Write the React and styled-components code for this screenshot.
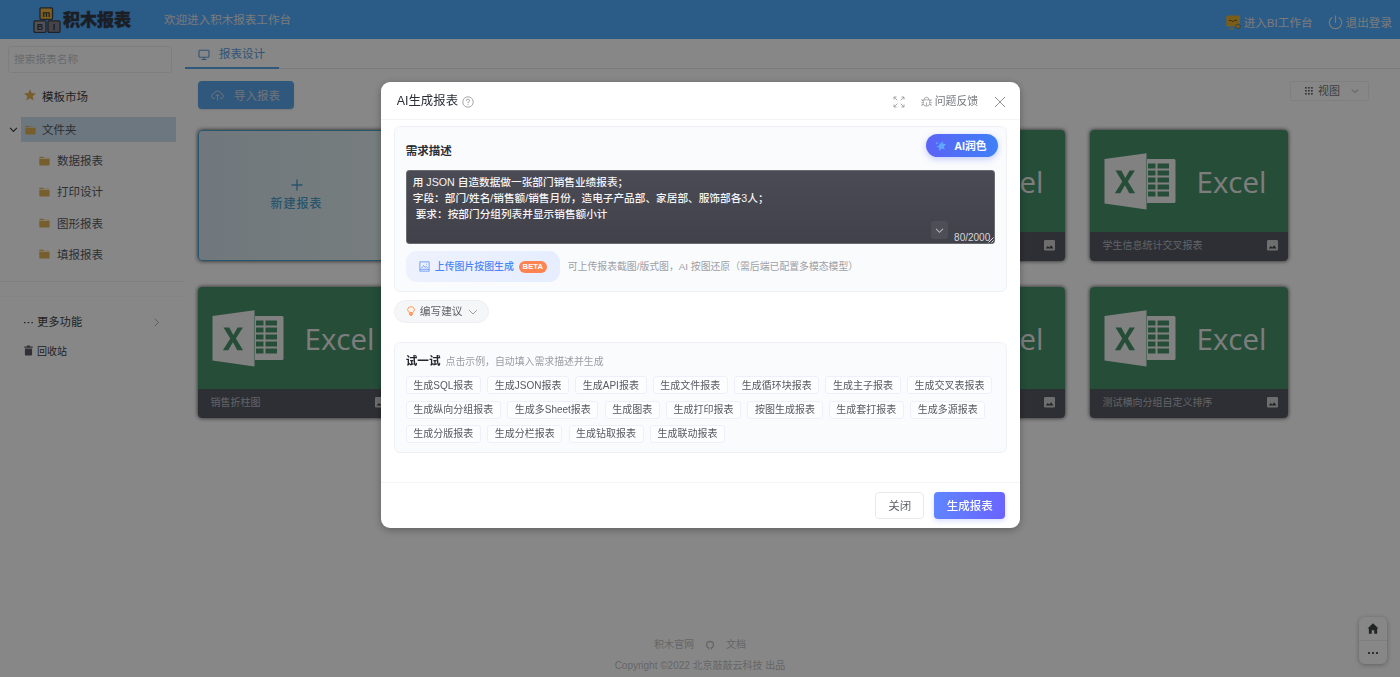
import React, { Fragment } from "react";
import styled, { createGlobalStyle } from "styled-components";

const GlobalStyle = createGlobalStyle`
    * { box-sizing: border-box; }
    html, body { margin: 0; padding: 0; overflow: hidden; }
    body {
        background: #fff;
        color: #3c3f45;
        font-family: "Liberation Sans", "Noto Sans CJK SC", sans-serif;
        font-size: 11.5px;
        line-height: 1.3;
    }
    svg { display: block; flex: none; }
`;

const folders = ["数据报表", "打印设计", "图形报表", "填报报表"];

// one entry per grid cell after the "new" card, blank ones have no title yet
const cards = [
    { id: 1, blank: true },
    { id: 2, blank: true },
    { id: 3 },
    { id: 4, name: "学生信息统计交叉报表" },
    { id: 5, name: "销售折柱图" },
    { id: 6, blank: true },
    { id: 7, blank: true },
    { id: 8 },
    { id: 9, name: "测试横向分组自定义排序" },
];

const samples = [
    "生成SQL报表", "生成JSON报表", "生成API报表", "生成文件报表", "生成循环块报表", "生成主子报表", "生成交叉表报表",
    "生成纵向分组报表", "生成多Sheet报表", "生成图表", "生成打印报表", "按图生成报表", "生成套打报表", "生成多源报表",
    "生成分版报表", "生成分栏报表", "生成钻取报表", "生成联动报表",
];

const prompt = "用 JSON 自造数据做一张部门销售业绩报表；\n字段：部门/姓名/销售额/销售月份，造电子产品部、家居部、服饰部各3人；\n 要求：按部门分组列表并显示销售额小计";

/* ---------- icons ---------- */

const Stroke = ({ size = 12, box = 12, w = 1, children }) => (
    <svg width={size} height={size} viewBox={`0 0 ${box} ${box}`} fill="none" stroke="currentColor" strokeWidth={w}>
        {children}
    </svg>
);

const Chevron = ({ size = 9, w = 1 }) => (
    <Stroke size={size} box={10} w={w}><path d="M1.2 3.2 5 7l3.8-3.8" /></Stroke>
);

const FolderIcon = () => (
    <svg width="11" height="10" viewBox="0 0 11 10" fill="#e0b256">
        <path d="M.3 2.300V1.200Q.3.700.8.700h3.200l1 1h5q.6 0 .6.6z" />
        <path d="M.3 2.900h10.300v5.900q0 .6-.6.6H.9q-.6 0-.6-.6z" />
    </svg>
);

const StarIcon = () => (
    <svg width="12" height="12" viewBox="0 0 12 12" fill="#e0b256">
        <path d="m6 .2 1.7 3.900 4.200.4-3.200 2.800 1 4.200L6 9.300l-3.700 2.200 1-4.200L.1 4.500l4.200-.4z" />
    </svg>
);

const PictureIcon = () => (
    <svg width="11" height="11" viewBox="0 0 11 11">
        <rect width="11" height="10.500" rx="1.200" fill="#d0d0d2" />
        <path d="M1.700 8.500 3.800 5.900l1.500 1.500L7.200 5.200l2.300 3.300z" fill="#43464d" />
    </svg>
);

const Logo = () => (
    <svg width="28" height="27" viewBox="0 0 28 27">
        <g stroke="#3c3f49" strokeWidth="1.300">
            <rect x="7" y=".8" width="12.500" height="11.500" rx="1" fill="#efb73c" />
            <rect x="1" y="13.800" width="12" height="11.500" rx="1" fill="#9c9ca2" />
            <rect x="15" y="13.800" width="12" height="11.500" rx="1" fill="#83838b" />
        </g>
        <g fontFamily="Liberation Sans" fontWeight="700" fontSize="9" textAnchor="middle" fill="#34363e">
            <text x="13.200" y="9.500">m</text>
            <text x="7" y="22.900">B</text>
            <text x="21" y="22.900">I</text>
        </g>
    </svg>
);

const BiIcon = () => (
    <svg width="15" height="15" viewBox="0 0 15 15">
        <rect x=".3" y=".5" width="13.700" height="11" rx="1.500" fill="#e6b02f" />
        <path d="M3 14h5" stroke="#e6b02f" strokeWidth="1" />
        <path d="M3 5.500h2.500l1.500 1.200L9 5l2 .8" stroke="#6b5f2a" fill="none" />
        <circle cx="12" cy="11.500" r="2.300" fill="#e6b02f" stroke="#51788f" strokeWidth=".8" />
    </svg>
);

const PowerIcon = () => (
    <Stroke size={15} box={15} w={1.2}>
        <path d="M4.300 2.200a6.200 6.200 0 1 0 6.400 0M7.500.5v7.300" />
    </Stroke>
);

const ExcelLogo = () => (
    <svg width="72" height="57" viewBox="0 0 72 57">
        <path d="M43 6h27q1.500 0 1.500 1.500v41q0 1.500-1.500 1.500H43z" fill="#f4f4f4" />
        <g fill="#46916b">
            {[10.5, 17.5, 24.5, 31.5, 38.5].map((y) => (
                <Fragment key={y}>
                    <rect x="44" y={y} width="7.500" height="5" />
                    <rect x="53.500" y={y} width="11.500" height="5" />
                </Fragment>
            ))}
        </g>
        <path d="M.5 6 42.500.3v56.200L.5 50.500z" fill="#f4f4f4" />
        <path d="M11.500 17.500h5.800l4 7.500 4.300-7.500h5.300l-7 11 7.200 11.800h-5.800l-4.400-8-4.600 8h-5.400l7.400-11.800z" fill="#46916b" />
    </svg>
);

/* ---------- cards ---------- */

const ReportCard = ({ name, blank }) => (
    <Card>
        <Cover>{!blank && <Fragment><ExcelLogo /><CoverText>Excel</CoverText></Fragment>}</Cover>
        <CardBar><span>{name}</span><PictureIcon /></CardBar>
    </Card>
);

const Workbench = () => (
    <Page>
        <Header>
            <Logo />
            <Brand>积木报表</Brand>
            <Welcome>欢迎进入积木报表工作台</Welcome>
            <HeaderLink><BiIcon />进入BI工作台</HeaderLink>
            <HeaderLink><PowerIcon />退出登录</HeaderLink>
        </Header>
        <Body>
            <Sidebar>
                <Search placeholder="搜索报表名称" />
                <Market><StarIcon />模板市场</Market>
                <TreeRoot>
                    <Chevron size={9} w={1.3} />
                    <TreeLabel><FolderIcon />文件夹</TreeLabel>
                </TreeRoot>
                {folders.map((f) => <TreeItem key={f}><FolderIcon />{f}</TreeItem>)}
                <SideGap />
                <MoreRow>
                    <svg width="9" height="3" viewBox="0 0 9 3" fill="#3c3f45">
                        <rect y="1" width="1.500" height="1.200" /><rect x="3.700" y="1" width="1.500" height="1.200" /><rect x="7.400" y="1" width="1.500" height="1.200" />
                    </svg>
                    更多功能
                    <Arrow><Stroke size={9} box={10} w={0.9}><path d="M3.200 1 7.200 5l-4 4" /></Stroke></Arrow>
                </MoreRow>
                <BinRow>
                    <svg width="9" height="11" viewBox="0 0 9 11" fill="#5a5c6a">
                        <path d="M.3 1.500h2.400L3.300.5h2.400l.6 1h2.400v1.200H.3zM.9 3.500h7.200v6q0 1-1 1H1.900q-1 0-1-1z" />
                    </svg>
                    回收站
                </BinRow>
            </Sidebar>
            <Content>
                <Tabs>
                    <Tab>
                        <Stroke size={12} box={12} w={1.1}>
                            <rect x="1" y="1.200" width="10" height="7" rx=".8" /><path d="M3.500 10.500h5M6 8v2.500" />
                        </Stroke>
                        报表设计
                    </Tab>
                </Tabs>
                <Toolbar>
                    <ImportBtn>
                        <Stroke size={13} box={13} w={0.9}>
                            <path d="M4 9.500H3A2.400 2.400 0 0 1 3 4.700a3.600 3.600 0 0 1 7 0 2.400 2.400 0 0 1 0 4.800H9M6.500 11.500v-6M4.500 7.300l2-2 2 2" />
                        </Stroke>
                        导入报表
                    </ImportBtn>
                    <ViewSelect>
                        <svg width="8" height="8" viewBox="0 0 8 8" fill="#6a6b71">
                            {[0, 3, 6].map((y) => [0, 3, 6].map((x) => <rect key={`${x}${y}`} x={x} y={y} width="1.800" height="1.600" />))}
                        </svg>
                        视图
                        <Arrow><Chevron size={8} w={1.2} /></Arrow>
                    </ViewSelect>
                </Toolbar>
                <Grid>
                    <NewCard>
                        <Stroke size={12} box={12} w={1.4}><path d="M6 .5v11M.5 6h11" /></Stroke>
                        新建报表
                    </NewCard>
                    {cards.map((c) => <ReportCard key={c.id} name={c.name} blank={c.blank} />)}
                </Grid>
                <Footer>
                    <FooterLinks>
                        积木官网
                        <Stroke size={10} box={10} w={1.3}><path d="M3.700 9.500V7.800Q1.300 7 1.500 4.200 2 1.500 5 1.500t3.500 2.700q.2 2.800-2.200 3.600v1.700" /></Stroke>
                        文档
                    </FooterLinks>
                    <div>Copyright ©2022 北京敲敲云科技 出品</div>
                </Footer>
            </Content>
        </Body>
        <FloatBar>
            <FloatBtn>
                <svg width="12" height="11" viewBox="0 0 13 12" fill="#3e4441"><path d="M6.500.2 12.500 6H11v5.700H7.900V7.800H5.100v3.900H2V6H.5z" /></svg>
            </FloatBtn>
            <FloatBtn>
                <svg width="10" height="2" viewBox="0 0 10 2" fill="#55595a"><rect width="2" height="2" /><rect x="4" width="2" height="2" /><rect x="8" width="2" height="2" /></svg>
            </FloatBtn>
        </FloatBar>
    </Page>
);

const AiDialog = () => (
    <Mask>
        <Dialog>
            <DialogHead>
                <span>AI生成报表</span>
                <Stroke size={12} box={12} w={0.8}>
                    <circle cx="6" cy="6" r="5.200" />
                    <path d="M4.300 4.900q0-1.700 1.700-1.700t1.700 1.500Q7.700 5.500 6 6.300v1M6 8.200v1" />
                </Stroke>
                <HeadTools>
                    <Stroke size={12} box={12} w={0.8}>
                        <path d="M1 3.500V1h2.500M1 1l3.300 3.300M8.500 1H11v2.500M11 1 7.700 4.300M1 8.500V11h2.500M1 11l3.300-3.300M11 8.500V11H8.500M11 11 7.700 7.700" />
                    </Stroke>
                    <Feedback>
                        <Stroke size={11} box={12} w={0.8}>
                            <path d="M3.500 4.200Q3.500 1.300 6 1.300t2.500 2.900M2.500 4.200h7v4Q9.500 11 6 11T2.500 8.200zM6 7v4M2.500 7.200H.3M9.500 7.200h2.200M2.500 4.900H1V3.300M9.500 4.900H11V3.300M2.700 9.300H1v1.700M9.300 9.300H11v1.700" />
                        </Stroke>
                        <span>问题反馈</span>
                    </Feedback>
                    <Stroke size={12} box={12} w={1}><path d="m1 1 10 10M11 1 1 11" /></Stroke>
                </HeadTools>
            </DialogHead>
            <DialogBody>
                <Panel $h={166}>
                    <PanelHead>
                        需求描述
                        <PolishBtn>
                            <svg width="12" height="12" viewBox="0 0 12 12" fill="#5fa8ff">
                                <path d="m7.300.8.600 2.700 3.300.8-2.300 2 .9 3.200-2.900-1.100L4.300 11l-.2-3.200L1.300 6.500l2.800-1 .4-2.400 1.400.6z" />
                                <path d="m1.900 1.500.5 1 1 .4-1 .5-.5 1-.5-1-1-.5 1-.4z" />
                            </svg>
                            AI润色
                        </PolishBtn>
                    </PanelHead>
                    <PromptBox>
                        {prompt}
                        <Collapse><Chevron size={9} w={1.2} /></Collapse>
                        <Counter>80/2000</Counter>
                        <Grip><Stroke size={6} box={6} w={0.9}><path d="M.5 5.500l5-5M3.500 5.500l2-2" /></Stroke></Grip>
                    </PromptBox>
                    <UploadRow>
                        <UploadBtn>
                            <Stroke size={11} box={12} w={0.8}>
                                <rect x="1" y="1" width="10" height="10" />
                                <path d="M1 9h10M3 7.500l2-2.500 1.700 2L8 6l1.500 1.500M7.700 3.500h1" />
                            </Stroke>
                            <span>上传图片按图生成</span>
                            <Beta>BETA</Beta>
                        </UploadBtn>
                        <Hint>可上传报表截图/版式图，AI 按图还原（需后端已配置多模态模型）</Hint>
                    </UploadRow>
                </Panel>
                <TipsBtn>
                    <svg width="8" height="11" viewBox="0 0 8 11" fill="#fff1e8" stroke="#ff9a62" strokeWidth="1">
                        <path d="M2.300 6.500Q.6 5.500.6 3.700.8.700 4 .700t3.400 3Q7.400 5.500 5.700 6.500z" />
                        <path d="M2.500 7.300h3v1.200L4 10l-1.500-1.500z" fill="#ff9a62" />
                    </svg>
                    编写建议
                    <Arrow $inline><Chevron size={10} /></Arrow>
                </TipsBtn>
                <Panel $h={111}>
                    <TryHead><b>试一试</b>点击示例，自动填入需求描述并生成</TryHead>
                    <Chips>{samples.map((s) => <Chip key={s}>{s}</Chip>)}</Chips>
                </Panel>
            </DialogBody>
            <DialogFoot>
                <Btn $w={49}>关闭</Btn>
                <Btn $w={71} $primary>生成报表</Btn>
            </DialogFoot>
        </Dialog>
    </Mask>
);

const App = () => (
    <Fragment>
        <GlobalStyle />
        <Workbench />
        <AiDialog />
    </Fragment>
);

export default App;

/* ---------- workbench styles ---------- */

const Page = styled.div`
    height: 677px;
    display: flex;
    flex-direction: column;
`;

const Header = styled.header`
    height: 39px;
    flex: none;
    display: flex;
    align-items: center;
    padding: 1px 8px 0 33px;
    background: #51acff;
    color: #e8e8e8;
`;

const Brand = styled.div`
    width: 68px;
    margin-left: 2px;
    padding-top: 2px;
    font-size: 17px;
    font-weight: 900;
    color: #343b46;
    -webkit-text-stroke: 0.4px #343b46;
`;

const Welcome = styled.div`
    margin-left: 33px;
    margin-right: auto;
    padding-top: 1px;
    font-size: 11.550px;
`;

const HeaderLink = styled.div`
    display: flex;
    align-items: center;
    gap: 3px;
    margin-left: 15px;
    padding-top: 5px;
    font-size: 11.600px;
`;

const Body = styled.div`
    flex: 1;
    display: flex;
    min-height: 0;
`;

const Sidebar = styled.aside`
    width: 185px;
    flex: none;
    display: flex;
    flex-direction: column;
    padding-top: 7px;
`;

const Search = styled.input`
    width: 164px;
    height: 27px;
    margin-left: 8px;
    padding: 0 5px 1px;
    border: 1px solid #efefef;
    border-radius: 3px;
    background: transparent;
    font: inherit;
    font-size: 10.700px;
    &::placeholder { color: #c6c8cc; }
`;

const Market = styled.div`
    height: 25px;
    margin: 11px 0 8px;
    padding: 2px 0 0 24px;
    display: flex;
    align-items: center;
    gap: 6px;
    svg { margin-bottom: 5px; }
`;

const TreeRoot = styled.div`
    height: 25px;
    display: flex;
    align-items: center;
    gap: 3px;
    padding: 0 9px 0 9px;
    margin-bottom: 3px;
`;

const TreeLabel = styled.div`
    flex: 1;
    height: 25px;
    display: flex;
    align-items: center;
    gap: 6px;
    padding: 2px 0 0 4px;
    background: #cde0f1;
    color: #55595f;
    svg { margin-bottom: 2px; }
`;

const TreeItem = styled.div`
    height: 31.200px;
    display: flex;
    align-items: center;
    gap: 7px;
    padding: 2px 0 0 39px;
    color: #55595f;
    svg { margin-bottom: 2px; }
`;

const SideGap = styled.div`
    height: 16px;
    margin-top: 11px;
    border-top: 1px solid #f1f1f1;
    border-bottom: 1px solid #f8f8f8;
`;

const MoreRow = styled.div`
    height: 28px;
    margin-top: 11px;
    padding: 1px 24px 0;
    display: flex;
    align-items: center;
    gap: 4px;
    font-size: 11.300px;
`;

const BinRow = styled(MoreRow)`
    margin-top: 1px;
    font-size: 10px;
    svg { margin-bottom: 2px; }
`;

const Arrow = styled.span`
    margin-left: ${(p) => (p.$inline ? 0 : "auto")};
    color: #9b9da3;
`;

const Content = styled.main`
    flex: 1;
    min-width: 0;
    display: flex;
    flex-direction: column;
`;

const Tabs = styled.div`
    height: 30px;
    flex: none;
    display: flex;
    border-bottom: 1px solid #e9e9e9;
`;

const Tab = styled.div`
    width: 94px;
    height: 30px;
    display: flex;
    align-items: center;
    gap: 9px;
    padding: 3px 0 0 13px;
    color: #5a9ede;
    border-bottom: 2px solid #5aa6ea;
`;

const Toolbar = styled.div`
    height: 60.500px;
    flex: none;
    padding: 12px 31px 0 13px;
    display: flex;
    justify-content: space-between;
    align-items: flex-start;
`;

const ImportBtn = styled.button`
    width: 96px;
    height: 28px;
    padding: 2px 0 0 13px;
    display: flex;
    align-items: center;
    gap: 10px;
    border: 0;
    border-radius: 4px;
    background: #5ba5ea;
    color: #d4dde6;
    font: inherit;
    box-shadow: 0 1px 2px rgba(0, 0, 0, 0.12);
    svg { margin-bottom: 2px; }
`;

const ViewSelect = styled.div`
    width: 79px;
    height: 20px;
    padding: 0 9px 0 14px;
    display: flex;
    align-items: center;
    gap: 5px;
    border: 1px solid #f0f0f0;
    border-radius: 2px;
    color: #74777d;
    font-size: 11px;
`;

const Grid = styled.div`
    display: grid;
    grid-template-columns: repeat(5, 198px);
    grid-auto-rows: 131.500px;
    column-gap: 25px;
    row-gap: 25.500px;
    padding-left: 12.500px;
`;

const Card = styled.div`
    display: flex;
    flex-direction: column;
    overflow: hidden;
    border-radius: 4px;
    box-shadow: 0 0 4px rgba(0, 0, 0, 0.75);
`;

const Cover = styled.div`
    flex: 1;
    display: flex;
    align-items: center;
    gap: 21px;
    padding: 1px 0 0 14px;
    background: #46916b;
`;

const CoverText = styled.div`
    color: #ececec;
    font-family: "Open Sans", "Noto Sans", sans-serif;
    font-size: 29.500px;
    line-height: 1;
`;

const CardBar = styled.div`
    height: 29px;
    flex: none;
    padding: 0 10px 2px 13px;
    display: flex;
    align-items: center;
    justify-content: space-between;
    background: #555a62;
    color: #b9bcc2;
    font-size: 10px;
`;

const NewCard = styled(Card)`
    align-items: center;
    justify-content: center;
    gap: 6px;
    border: 1px solid #4ba0cc;
    background: linear-gradient(90deg, #d5e2ed, #e2eeee);
    color: #4ba0cc;
    font-size: 12px;
    font-weight: 500;
    letter-spacing: 1px;
    padding-top: 1px;
`;

const Footer = styled.footer`
    margin-top: auto;
    height: 42px;
    padding-right: 185px;
    text-align: center;
    color: #c0c2c5;
    font-size: 10px;
`;

const FooterLinks = styled.div`
    display: flex;
    justify-content: center;
    align-items: center;
    gap: 11px;
    height: 13px;
    margin: 3px 0 8px;
`;

const FloatBar = styled.div`
    position: fixed;
    right: 13px;
    bottom: 13px;
    width: 28px;
    height: 47px;
    border-radius: 6px;
    background: #fff;
    box-shadow: 0 1px 5px rgba(0, 0, 0, 0.3);
`;

const FloatBtn = styled.div`
    height: 23px;
    display: flex;
    align-items: center;
    justify-content: center;
    & + & { border-top: 1px solid #ececec; height: 25px; }
`;

/* ---------- dialog styles ---------- */

const Mask = styled.div`
    position: fixed;
    inset: 0;
    display: flex;
    justify-content: center;
    align-items: flex-start;
    padding: 82.300px 0 0 1px;
    background: rgba(0, 0, 0, 0.47);
`;

const Dialog = styled.div`
    width: 639.500px;
    height: 446px;
    display: flex;
    flex-direction: column;
    border-radius: 9px;
    background: #fff;
    box-shadow: 0 2px 8px rgba(0, 0, 0, 0.3);
`;

const DialogHead = styled.div`
    height: 38px;
    flex: none;
    padding: 0 14px 0 16px;
    display: flex;
    align-items: center;
    gap: 4px;
    border-bottom: 1px solid #f4f4f6;
    font-size: 12.400px;
    color: #2a2e36;
    svg { color: #8f9196; margin-top: 2px; }
    span { padding-top: 1px; }
`;

const HeadTools = styled.div`
    margin-left: auto;
    display: flex;
    align-items: center;
    gap: 16px;
    color: #77797e;
`;

const Feedback = styled.div`
    display: flex;
    align-items: center;
    gap: 3px;
    font-size: 10.900px;
`;

const DialogBody = styled.div`
    flex: 1;
    padding: 6px 13px 0;
`;

const Panel = styled.section`
    height: ${(p) => p.$h}px;
    padding: 0 11px;
    border: 1px solid #eef0f4;
    border-radius: 6px;
    background: #fafbfd;
`;

const PanelHead = styled.div`
    height: 43px;
    display: flex;
    justify-content: space-between;
    padding-top: 16.500px;
    font-weight: 700;
    color: #2b2e35;
`;

const PolishBtn = styled.button`
    width: 72px;
    height: 23px;
    margin: -9.500px -3px 0 0;
    padding: 1px 0 0 9px;
    display: flex;
    align-items: center;
    gap: 7px;
    border: 0;
    border-radius: 12px;
    background: linear-gradient(90deg, #5b63f5, #3f80f8);
    color: #fff;
    font: inherit;
    font-size: 10.800px;
    box-shadow: 0 2px 6px rgba(80, 110, 250, 0.35);
`;

const PromptBox = styled.div`
    position: relative;
    height: 74px;
    padding: 3px 6px;
    border: 1px solid #6b6b72;
    border-radius: 3px;
    background: linear-gradient(#4b4b55, #41414a);
    color: #f4f4f5;
    font-size: 10.670px;
    font-weight: 500;
    line-height: 16px;
    white-space: pre;
`;

const Collapse = styled.span`
    position: absolute;
    right: 46px;
    bottom: 4px;
    width: 17px;
    height: 18px;
    display: flex;
    align-items: center;
    justify-content: center;
    border-radius: 3px;
    background: #4e4e57;
    color: #b4b4b8;
`;

const Counter = styled.span`
    position: absolute;
    right: 4px;
    bottom: -1px;
    font-size: 10px;
    line-height: 12px;
    color: #d6d6da;
`;

const Grip = styled.span`
    position: absolute;
    right: 0;
    bottom: 0;
`;

const UploadRow = styled.div`
    display: flex;
    align-items: center;
    gap: 8px;
    margin-top: 7px;
`;

const UploadBtn = styled.div`
    width: 154px;
    height: 31px;
    padding-left: 13px;
    display: flex;
    align-items: center;
    gap: 5px;
    border-radius: 11px;
    background: linear-gradient(120deg, #eef2fd, #e5edff);
    color: #4a84f6;
    font-size: 9.900px;
    font-weight: 500;
    span:first-of-type { padding-top: 1px; }
`;

const Beta = styled.span`
    width: 28px;
    height: 12px;
    display: flex;
    align-items: center;
    justify-content: center;
    border-radius: 6px;
    background: #ff8351;
    color: #fff;
    font-size: 7.700px;
    font-weight: 700;
`;

const Hint = styled.span`
    padding-top: 2px;
    font-size: 9.850px;
    color: #9da0a5;
`;

const TipsBtn = styled.div`
    width: 95px;
    height: 23px;
    margin: 8px 0 19px;
    padding-left: 12px;
    display: flex;
    align-items: center;
    gap: 5px;
    border: 1px solid #efeff2;
    border-radius: 12px;
    background: #f5f6f8;
    color: #5c5f65;
    font-size: 10.700px;
`;

const TryHead = styled.div`
    height: 33px;
    padding-top: 10px;
    display: flex;
    align-items: baseline;
    gap: 5px;
    font-size: 9.900px;
    color: #9a9da2;
    b { font-size: 11.600px; color: #23262d; }
`;

const Chips = styled.div`
    display: flex;
    flex-wrap: wrap;
    gap: 6.300px 6.200px;
`;

const Chip = styled.span`
    height: 18px;
    padding: 0 6.600px;
    display: flex;
    align-items: center;
    border: 1px solid #ebf0fb;
    border-radius: 3px;
    background: #fcfdff;
    color: #56595f;
    font-size: 10px;
    white-space: nowrap;
`;

const DialogFoot = styled.div`
    height: 46px;
    flex: none;
    padding: 9px 15px 0;
    display: flex;
    justify-content: flex-end;
    gap: 10px;
    border-top: 1px solid #f4f4f6;
`;

const Btn = styled.button`
    width: ${(p) => p.$w}px;
    height: 27px;
    padding: 1px 0 0;
    border: 1px solid ${(p) => (p.$primary ? "transparent" : "#e8e9ec")};
    border-radius: 4px;
    background: ${(p) => (p.$primary ? "linear-gradient(100deg, #5f86ff, #6a63ff) border-box" : "#fff")};
    color: ${(p) => (p.$primary ? "#fff" : "#5c5f66")};
    font: inherit;
    font-weight: ${(p) => (p.$primary ? 500 : 400)};
    box-shadow: ${(p) => (p.$primary ? "0 2px 5px rgba(95, 120, 255, 0.25)" : "none")};
`;
